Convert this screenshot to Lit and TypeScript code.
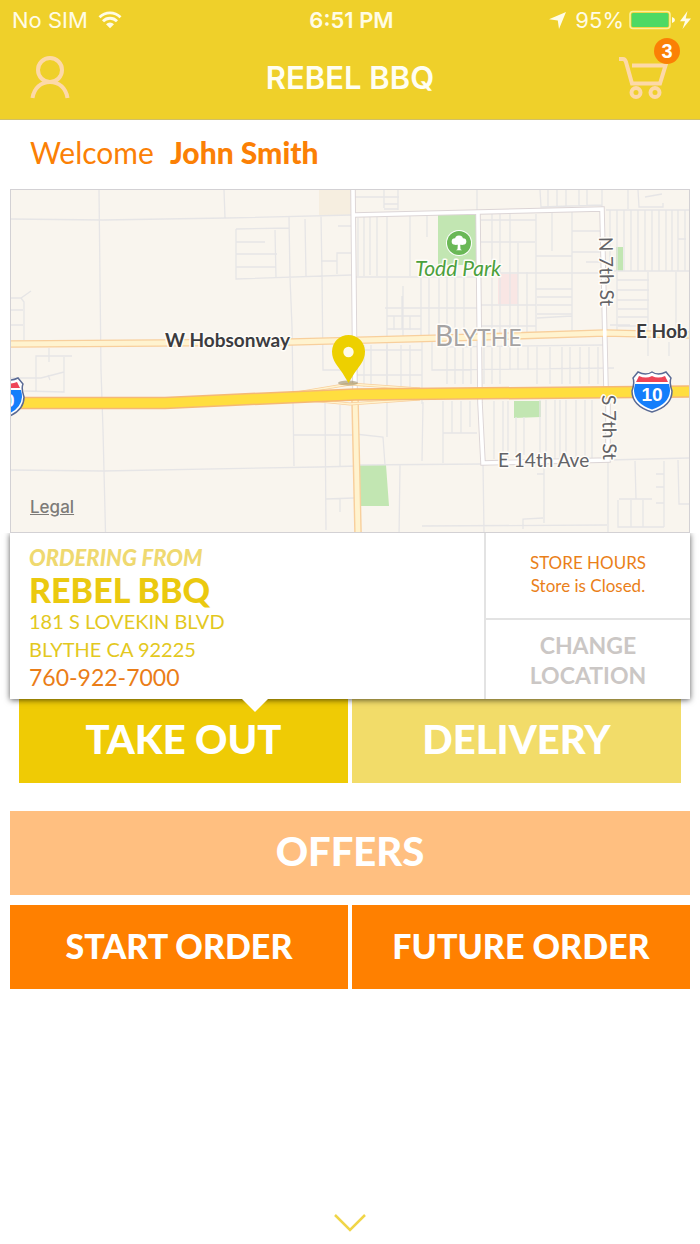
import { LitElement, html, css, svg } from "lit";
import { customElement, property, state } from "lit/decorators.js";
import { classMap } from "lit/directives/class-map.js";

@customElement("status-bar")
class StatusBar extends LitElement {
  @property() carrier = "No SIM";
  @property() time = "6:51 PM";
  @property({ type: Number }) battery = 95;

  static styles = css`
    :host {
      display: grid;
      grid-template-columns: 1fr auto 1fr;
      align-items: center;
      height: 40px;
      padding: 0 9px 0 12px;
      color: #fffce6;
      font: 400 22px/40px Inter, "Liberation Sans", sans-serif;
    }
    .side {
      display: flex;
      align-items: center;
      gap: 10px;
    }
    .end {
      justify-content: flex-end;
      gap: 5px;
    }
    .time {
      font-weight: 600;
    }
    .arrow {
      margin-right: 4px;
    }
    svg {
      display: block;
    }
  `;

  render() {
    return html`
      <div class="side">
        <span>${this.carrier}</span>
        <svg width="24" height="18" viewBox="0 0 24 18" aria-label="Wi-Fi">
          <path d="M1.500 6.200a15 15 0 0 1 21 0M5 10.200a9.800 9.800 0 0 1 14 0" fill="none" stroke="currentColor" stroke-width="2.800"/>
          <path d="M8 13.200a5.600 5.600 0 0 1 8 0L12 17.200z" fill="currentColor"/>
        </svg>
      </div>
      <span class="time">${this.time}</span>
      <div class="side end">
        <svg class="arrow" width="17" height="17" viewBox="0 0 17 17" aria-label="Location in use">
          <path d="M17 0L10 17 8.800 8.400 0 7.300z" fill="currentColor"/>
        </svg>
        <span>${this.battery}%</span>
        <svg width="62" height="20" viewBox="0 0 62 20" aria-label="Charging">
          <rect x="1" y="1.500" width="40" height="17" rx="3" fill="none" stroke="#fdf09a" stroke-width="1.600"/>
          <rect x="2.500" y="3" width=${this.battery * 0.39} height="14" rx="1.500" fill="#4cd964"/>
          <path d="M43 7q3 1 3 3t-3 3z" fill="currentColor"/>
          <path d="M58.500 1L51 11.200h5L53.500 19 62 8.500h-5.300z" fill="currentColor"/>
        </svg>
      </div>
    `;
  }
}

@customElement("store-map")
class StoreMap extends LitElement {
  static styles = css`
    :host {
      display: block;
      position: relative;
      border: 1px solid #d3d1d4;
      background: #f9f5ee;
    }
    .map {
      display: block;
      width: 100%;
      height: auto;
      font-family: Lato, "Liberation Sans", sans-serif;
    }
    .street {
      fill: none;
      stroke: #e6e5e6;
      stroke-width: 1.3;
    }
    .casing {
      fill: none;
      stroke: #dcd5d6;
      stroke-width: 5.5;
    }
    .avenue {
      fill: none;
      stroke: #fff;
      stroke-width: 3.6;
    }
    .edge {
      fill: none;
      stroke: #f8cf9c;
      stroke-width: 7.6;
    }
    .primary {
      fill: none;
      stroke: #fff3cf;
      stroke-width: 4.8;
    }
    .park {
      fill: #c2e6b2;
    }
    .label {
      paint-order: stroke;
      stroke: #fffdf9;
      stroke-width: 3px;
      stroke-linejoin: round;
      fill: #636366;
      font-size: 19px;
    }
    .major {
      fill: #3c3c3f;
      font-weight: 700;
    }
    .park-name {
      fill: #4ba03c;
      font-style: italic;
      font-size: 21px;
    }
    .city {
      fill: #a5a3a3;
      font-size: 28px;
    }
    .small-cap {
      font-size: 23px;
    }
    .route {
      fill: #fff;
      font: 700 19px "Liberation Sans", sans-serif;
    }
    .legal {
      position: absolute;
      left: 19px;
      bottom: 13px;
      color: #7d7b78;
      font: 500 17px/24px Inter, "Liberation Sans", sans-serif;
    }
  `;

  private shield(x: number, y: number, route: string) {
    return svg`
      <g transform="translate(${x} ${y})">
        <path d="M-14-20Q-6-16 0-20 6-16 14-20L19-14Q17-10 20-1 20 14 0 20-20 14-20-1-17-10-19-14z"
          fill="#fff" stroke="#5a6a94" stroke-width="1.500"/>
        <path d="M-13-16Q-6-13 0-16 6-13 13-16L16-10H-16z" fill="#ee4557"/>
        <path d="M-17-8H17Q18-4 18-1 17 12 0 17.500-17 12-18-1-18-4-17-8z" fill="#147efb"/>
        <text class="route" x="0" y="9" text-anchor="middle">${route}</text>
      </g>`;
  }

  render() {
    return html`
      <svg class="map" viewBox="11 190 678 342" role="img" aria-label="Map of Blythe">
        <rect x="319" y="190" width="33" height="25" fill="#f6eee0"/>
        <path class="park" d="M438 215h38v50h-38zM616 247h7v24h-7zM514 401h27v16l-27 1zM359 465h27l3 41h-30z"/>
        <path d="M498 274h20v30h-20z" fill="#f9e6e4"/>

        <path class="street" d="M99 190l2 180 2 60 2.500 102M11 219l92 1 124-2 125-3M224 190l1 28
          M236 229l53-1M236 229v50l116-4M236 242h29M236 254h41M236 267h40M275 230l1 48M289 217l1 60 2 50 1 65M305 219l1 57M321 215l1 60 1 95h30M338 226h14M321 261h16M337 274v-21h15
          M11 298h10l10-7M21 298l3 4v38M11 310h12M11 325h12M36 392v-36h36M49 348v14M11 378h30l23-6M48 375l2 5M64 357v35l-40-1
          M11 470l92 1 217-4 38-1M293 402l1 64M294 435h60M325 402l1 128M340 405v61M326 499l28-1M340 499v13"/>
        <path class="street" d="M355 197h44M384 190v18M398 190v20M384 204h14M384 209h14M477 190v22M540 190l1 17 61-2M548 190v16M557 190v16M566 190v16M579 190v16M587 190v16M602 190v19
          M628 190v19M638 190l1 17h24v-4M645 197l17-3M606 210h83M606 271h83"/>
        <path class="street" d="M358 218v58M364 217v59M370 217v58M377 216v60M387 216v221M410 216v60M427 216v21M355 277h124
          M403 336v-50M421 276v61M429 276v61M439 276v61M447 276v61M455 276v61M464 276v61M385 308h95M387 316h34M387 329h34M394 316v14M402 296v33M410 316v14
          M481 220h55M481 242h54M492 214v121M500 214v121M510 214v121M518 243v92M527 272v63M536 214v121M481 273h120M480 305h56M480 326h56
          M536 256h36M552 212v39M572 212v122M572 231h28M572 252h30M586 262h15M536 289h36M537 297h35M537 305h35M537 314h35M537 318l35-2"/>
        <path class="street" d="M610 210v61M617 210v61M624 210v61M631 210v61M638 210v61M645 210v61M652 210v61M659 210v61M666 210v61M672 210v61M678 210v61M685 210v61M678 239h8
          M617 272v62M617 280h32M617 290h32M617 300h32M618 309h30M618 317h30M618 326h30M648 272v84M676 272v60M669 342v14M610 325h20"/>
        <path class="street" d="M355 350h67M364 345v42M371 345v42M387 345v42M401 345v42M410 345v42M422 340v64M355 375h67M432 340v30l182-2M442 347l161-2M447 346v38M455 346v38M463 346v38M471 346v38
          M484 346v38M492 346v38M500 346v38M510 346v24M518 346v24M528 346v24M537 346v38M550 347v37M562 347v37M570 347v37M580 347v37M589 347v37M598 347v37"/>
        <path class="street" d="M355 434l28 3 2 28M423 402l-1 59M443 401v62M443 433h34M452 401v32M461 401v32M470 401v26M494 401v58M503 401v58M508 401v58M516 417v38M524 417v38M540 400v59M546 400v59
          M555 400v59M560 400v59M566 400v59M576 400v59M585 400v59M592 400v59M355 465l130-1M608 460l81-2M400 465l-1 73-44 2M483 464l1 68M422 526l185-1M544 462v61M537 474h7M523 529v-10l20-1
          M608 462v70M635 461l1 38M619 499h33M618 500v27h46M631 500v27M643 500v27M664 461v66M656 474h8M656 487h8M656 503h8M678 460l1 44h11"/>

        <path class="casing" d="M353 190l2 200M354 215l248-6 4 180M478 213l2 190 3 60 125-3V390"/>
        <path class="edge" d="M355 400l3 132M11 344l150-1 130-1 190-5 124-4 84 2"/>
        <path class="primary" d="M355 396l3 136M11 344l150-1 130-1 190-5 124-4 84 2"/>
        <path class="avenue" d="M353 190l2 200M354 215l248-6 4 180M478 213l2 190 3 60 125-3V390"/>
        <path d="M290 394l60-10 70 5M290 398l60 6 70-5" fill="none" stroke="#f8cf9c" stroke-width="3"/>
        <path d="M290 394l60-10 70 5M290 398l60 6 70-5" fill="none" stroke="#fff3cf" stroke-width="1.300"/>
        <path d="M11 403h154l65-3 125-5.500 334-3" fill="none" stroke="#f5b875" stroke-width="12.500"/>
        <path d="M11 403h154l65-3 125-5.500 334-3" fill="none" stroke="#ffde3f" stroke-width="9.500"/>

        <circle cx="459" cy="243" r="13" fill="#fff"/>
        <circle cx="459" cy="243" r="12" fill="#6ab856"/>
        <g fill="#fff">
          <circle cx="459" cy="239.500" r="4"/>
          <circle cx="455" cy="241.500" r="3.300"/>
          <circle cx="463" cy="241.500" r="3.300"/>
          <path d="M455 241h8v3.800h-2.800l.3 4.500 1.500 1h-6l1.500-1 .3-4.500H455z"/>
        </g>

        <text class="label park-name" x="458" y="276" text-anchor="middle">Todd Park</text>
        <text class="label city" x="435" y="346">B<tspan class="small-cap">LYTHE</tspan></text>
        <text class="label major" x="165" y="347">W Hobsonway</text>
        <text class="label major" x="636" y="338">E Hob</text>
        <text class="label" x="498" y="467">E 14th Ave</text>
        <text class="label" transform="translate(599 237) rotate(89)">N 7th St</text>
        <text class="label" transform="translate(602 395) rotate(89)">S 7th St</text>
        ${this.shield(652, 392, "10")}
        ${this.shield(4, 398, "10")}

        <ellipse cx="348" cy="383" rx="10" ry="2.500" fill="#8c7c50" opacity=".5"/>
        <path fill="#edd000" d="M348.500 383Q343 373 336 364 332 358 332 351.500a16.500 16.500 0 0 1 33 0Q365 358 361 364 354 373 348.500 383z"/>
        <circle cx="348.500" cy="352" r="5.200" fill="#fffbe8"/>
      </svg>
      <a class="legal" href="#legal">Legal</a>
    `;
  }
}

@customElement("app-root")
class AppRoot extends LitElement {
  @property({ type: Number }) cartCount = 3;
  @state() private mode: "takeout" | "delivery" = "takeout";

  static styles = css`
    :host {
      display: flex;
      flex-direction: column;
      min-height: 100vh;
      background: #fff;
      color: #fb8005;
      font-family: Lato, "Liberation Sans", sans-serif;
    }
    * {
      box-sizing: border-box;
    }
    button {
      margin: 0;
      padding: 0;
      border: 0;
      background: none;
      font: inherit;
      color: inherit;
      cursor: pointer;
    }
    h1,
    h2,
    p {
      margin: 0;
    }
    svg {
      display: block;
    }
    .top {
      background: #efd02a;
      border-bottom: 1px solid #d0bf67;
    }
    .nav {
      display: grid;
      grid-template-columns: 62px 1fr 62px;
      align-items: center;
      padding: 8px 20px 11px;
    }
    .title {
      color: #fffef2;
      text-align: center;
      font: 600 31px/40px Inter, "Liberation Sans", sans-serif;
    }
    .icon {
      position: relative;
      height: 60px;
    }
    .user {
      margin-left: 10px;
    }
    .badge {
      position: absolute;
      top: -10px;
      right: 0;
      width: 26px;
      height: 26px;
      border-radius: 50%;
      background: #fb8005;
      color: #fff;
      font: 700 20px/26px "Liberation Sans", sans-serif;
    }
    .welcome {
      display: flex;
      gap: 16px;
      padding: 12px 30px 17px;
      font-size: 30px;
      line-height: 40px;
    }
    .welcome strong {
      font-weight: 900;
    }
    .content {
      display: flex;
      flex-direction: column;
      padding: 0 10px;
    }
    .card {
      position: relative;
      z-index: 1;
      display: grid;
      grid-template-columns: 23fr 10fr;
      background: #fff;
      box-shadow: 0 1px 6px rgba(0, 0, 0, 0.65);
      clip-path: inset(0 -10px -14px -10px);
    }
    .notch {
      position: absolute;
      left: 36%;
      top: 100%;
      transform: translateX(-50%);
    }
    .store {
      padding: 11px 19px 8px;
      color: #e3c81e;
      line-height: 28px;
    }
    .caption {
      color: #efd970;
      font-size: 22px;
      font-weight: 900;
      font-style: italic;
    }
    .name {
      color: #ebc90f;
      font-size: 34px;
      line-height: 35px;
      font-weight: 900;
    }
    .address {
      font-size: 20px;
      line-height: 28px;
    }
    .phone {
      display: block;
      color: #ea7d17;
      font-size: 23px;
      text-decoration: none;
    }
    .aside {
      display: grid;
      grid-template-rows: 85px 1fr;
      border-left: 2px solid #e3e3e3;
      text-align: center;
    }
    .hours {
      padding-top: 18px;
      color: #ea7f19;
      font-size: 17px;
      line-height: 23px;
    }
    .change {
      border-top: 2px solid #e3e3e3;
      color: #cbc7c5;
      font-size: 23px;
      line-height: 30px;
      font-weight: 700;
    }
    .change span {
      display: block;
    }
    .pair {
      display: grid;
      grid-template-columns: 1fr 1fr;
      gap: 4px;
    }
    .modes {
      padding: 0 9px;
    }
    .tile {
      height: 84px;
      padding-bottom: 4px;
      color: #fff;
      font-size: 40px;
      font-weight: 900;
    }
    .mode {
      background: #f2dc69;
    }
    .chosen {
      background: #efcb05;
    }
    .offers {
      margin: 28px 0 10px;
      background: #ffbf80;
    }
    .order {
      background: #ff8000;
      font-size: 34px;
    }
    .more {
      margin: auto auto 10px;
      padding: 2px;
    }
  `;

  private modeTile(mode: "takeout" | "delivery", label: string) {
    const on = this.mode === mode;
    return html`<button
      class=${classMap({ tile: true, mode: true, chosen: on })}
      aria-pressed=${on}
      @click=${() => (this.mode = mode)}
    >${label}</button>`;
  }

  render() {
    return html`
      <header class="top">
        <status-bar></status-bar>
        <div class="nav">
          <button class="icon" aria-label="Account">
            <svg class="user" width="40" height="44" viewBox="0 0 40 44" fill="none" stroke="#fdd9a8" stroke-width="4">
              <circle cx="20" cy="14" r="12"/>
              <path d="M2.500 42C4 32 11 26 20 26s16 6 17.500 16"/>
            </svg>
          </button>
          <h1 class="title">REBEL BBQ</h1>
          <button class="icon" aria-label="Cart">
            <svg width="50" height="44" viewBox="0 0 50 44" fill="none" stroke="#fdd9a8" stroke-width="4">
              <path d="M1 3h4q2 0 3 3l6 21.500h28L47.500 9.500H14"/>
              <circle cx="18" cy="36.500" r="4.500"/>
              <circle cx="37" cy="36.500" r="4.500"/>
            </svg>
            <span class="badge">${this.cartCount}</span>
          </button>
        </div>
      </header>

      <p class="welcome"><span>Welcome</span><strong>John Smith</strong></p>

      <main class="content">
        <store-map></store-map>
        <section class="card">
          <div class="store">
            <p class="caption">ORDERING FROM</p>
            <h2 class="name">REBEL BBQ</h2>
            <p class="address">181 S LOVEKIN BLVD<br />BLYTHE CA 92225</p>
            <a class="phone" href="tel:760-922-7000">760-922-7000</a>
          </div>
          <div class="aside">
            <p class="hours">STORE HOURS<br />Store is Closed.</p>
            <button class="change"><span>CHANGE</span><span>LOCATION</span></button>
          </div>
          <svg class="notch" width="26" height="13" viewBox="0 0 26 13"><path d="M0 0h26L13 13z" fill="#fff"/></svg>
        </section>
        <div class="pair modes">
          ${this.modeTile("takeout", "TAKE OUT")}
          ${this.modeTile("delivery", "DELIVERY")}
        </div>
        <button class="tile offers">OFFERS</button>
        <div class="pair">
          <button class="tile order">START ORDER</button>
          <button class="tile order">FUTURE ORDER</button>
        </div>
      </main>

      <button class="more" aria-label="Show more">
        <svg width="32" height="18" viewBox="0 0 32 18"><path d="M1 1l15 15L31 1" fill="none" stroke="#f0d548" stroke-width="2.500"/></svg>
      </button>
    `;
  }
}
